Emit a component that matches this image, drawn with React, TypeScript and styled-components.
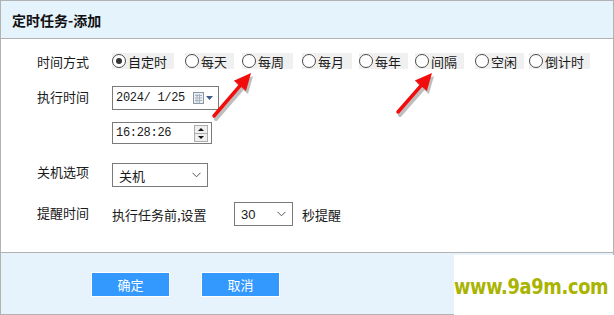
import React from 'react';
import styled, { createGlobalStyle } from 'styled-components';

const GlobalStyle = createGlobalStyle`
  html, body {
    margin: 0;
    padding: 0;
    background: #ffffff;
  }
  body {
    font-family: "Noto Sans CJK SC", "Liberation Sans", sans-serif;
    color: #1a1a1a;
  }
`;

const Page = styled.div`
  position: relative;
  width: 614px;
  height: 315px;
  overflow: hidden;
`;

const Dialog = styled.div`
  width: 614px;
  height: 315px;
  box-sizing: border-box;
  border: 1px solid #b2b2b2;
  display: flex;
  flex-direction: column;
`;

const TitleBar = styled.div`
  height: 37px;
  background: #e5f3fd;
  border-bottom: 1px solid #b2b2b2;
  display: flex;
  align-items: center;
  padding-left: 11px;
  font-size: 14px;
  font-weight: 700;
  color: #111;
`;

const Body = styled.div`
  flex: 1;
  padding: 14px 0 0 36px;
  display: flex;
  flex-direction: column;
`;

const Row = styled.div<{ $mt?: number }>`
  display: grid;
  grid-template-columns: 75px auto;
  align-items: start;
  margin-top: ${(p) => p.$mt ?? 0}px;
`;

const Label = styled.div<{ $pt?: number }>`
  font-size: 13px;
  line-height: 18px;
  padding-top: ${(p) => p.$pt ?? 0}px;
`;

const RadioGroup = styled.div`
  display: flex;
  align-items: center;
`;

const RadioItem = styled.div<{ $w: number; $gap: number }>`
  width: ${(p) => p.$w}px;
  margin-right: ${(p) => p.$gap}px;
  height: 16px;
  background: #f0f0f0;
  display: flex;
  align-items: center;
  font-size: 13px;
  white-space: nowrap;
`;

const RadioCircle = styled.span<{ $on?: boolean }>`
  width: 12px;
  height: 12px;
  border: 1px solid #4a4a4a;
  border-radius: 50%;
  background: #fff;
  margin: 0 2px 0 0;
  display: inline-flex;
  align-items: center;
  justify-content: center;
  &::after {
    content: '';
    width: 6px;
    height: 6px;
    border-radius: 50%;
    background: ${(p) => (p.$on ? '#333' : 'transparent')};
  }
`;

const Stack = styled.div`
  display: flex;
  flex-direction: column;
  gap: 12px;
`;

const Field = styled.div<{ $w: number; $h: number }>`
  width: ${(p) => p.$w}px;
  height: ${(p) => p.$h}px;
  box-sizing: border-box;
  border: 1px solid #7a7a7a;
  background: #fff;
  display: flex;
  align-items: center;
  padding-left: 3px;
  padding-right: 3px;
  font-family: "Liberation Mono", "DejaVu Sans Mono", monospace;
  font-size: 12px;
  letter-spacing: -0.3px;
`;

const FieldText = styled.span`
  flex: 1;
  white-space: pre;
`;

const Spinner = styled.div`
  width: 14px;
  height: 17px;
  box-sizing: border-box;
  border: 1px solid #adadad;
  background: #efefef;
  display: flex;
  flex-direction: column;
`;

const SpinHalf = styled.div<{ $down?: boolean }>`
  flex: 1;
  display: flex;
  align-items: center;
  justify-content: center;
  border-top: ${(p) => (p.$down ? '1px solid #adadad' : 'none')};
  &::after {
    content: '';
    border-left: 3px solid transparent;
    border-right: 3px solid transparent;
    ${(p) => (p.$down ? 'border-top: 3px solid #111;' : 'border-bottom: 3px solid #111;')}
  }
`;

const SelectBox = styled.div<{ $w: number }>`
  width: ${(p) => p.$w}px;
  height: 24px;
  box-sizing: border-box;
  border: 1px solid #7a7a7a;
  background: #fff;
  display: flex;
  align-items: center;
  padding: 0 6px 0 6px;
  font-size: 13px;
`;

const SelectText = styled.span<{ $sans?: boolean }>`
  flex: 1;
  font-family: ${(p) =>
    p.$sans ? '"Liberation Sans", sans-serif' : '"Noto Sans CJK SC", sans-serif'};
`;

const Inline = styled.div`
  display: flex;
  align-items: center;
  font-size: 13px;
`;

const Footer = styled.div`
  height: 61px;
  border-top: 1px solid #b2b2b2;
  background: #e6f3fd;
  display: flex;
  align-items: center;
  padding-left: 90px;
  gap: 31px;
`;

const Button = styled.div`
  width: 79px;
  height: 25px;
  box-sizing: border-box;
  border: 1px solid #ffffff;
  background: #3399ff;
  color: #fff;
  font-size: 13px;
  display: flex;
  align-items: center;
  justify-content: center;
  margin-top: 2px;
`;

const Watermark = styled.div`
  position: absolute;
  left: 454px;
  top: 255px;
  width: 160px;
  height: 60px;
  background: #fff;
  overflow: hidden;
`;

const WatermarkText = styled.div`
  position: absolute;
  left: 0;
  top: 21px;
  white-space: nowrap;
  font-family: "Liberation Sans Narrow", "DejaVu Sans Condensed", "Liberation Sans", sans-serif;
  font-weight: 700;
  font-size: 19px;
  line-height: 19px;
  color: #a9b400;
  letter-spacing: -0.3px;
  transform: scale(1.04, 1.12);
  transform-origin: left top;
`;

const ArrowLayer = styled.svg`
  position: absolute;
  left: 0;
  top: 0;
  pointer-events: none;
`;

const CalendarIcon = () => (
  <svg width="22" height="14" viewBox="0 0 22 14">
    <rect x="0.5" y="1.5" width="10" height="11" fill="#e9eef4" stroke="#8b96a3" />
    <path d="M2 4.5h7M2 7h7M2 9.5h7M4 3v9M6.5 3v9" stroke="#a9b3be" strokeWidth="1" />
    <path d="M13 5h7l-3.5 4z" fill="#3e5c8a" />
  </svg>
);

const Chevron = () => (
  <svg width="9" height="6" viewBox="0 0 9 6">
    <path d="M0.5 0.8L4.5 4.8L8.5 0.8" fill="none" stroke="#555" strokeWidth="1" />
  </svg>
);

const Arrow = ({ x1, y1, x2, y2 }: { x1: number; y1: number; x2: number; y2: number }) => {
  const a = Math.atan2(y2 - y1, x2 - x1);
  const L = 17;
  const W = 8;
  const bx = x2 - L * Math.cos(a);
  const by = y2 - L * Math.sin(a);
  const px = -Math.sin(a);
  const py = Math.cos(a);
  const head = `${x2},${y2} ${bx + W * px},${by + W * py} ${bx - W * px},${by - W * py}`;
  return (
    <g>
      <g transform="translate(2,3)" opacity="0.25">
        <line x1={x1} y1={y1} x2={bx} y2={by} stroke="#000" strokeWidth="4" strokeLinecap="round" />
        <polygon points={head} fill="#000" />
      </g>
      <line x1={x1} y1={y1} x2={bx} y2={by} stroke="#f20d0d" strokeWidth="3.5" strokeLinecap="round" />
      <polygon points={head} fill="#f20d0d" />
    </g>
  );
};

const radios = [
  { t: '自定时', w: 62, gap: 11, on: true },
  { t: '每天', w: 49, gap: 8 },
  { t: '每周', w: 51, gap: 9 },
  { t: '每月', w: 50, gap: 7 },
  { t: '每年', w: 49, gap: 7 },
  { t: '间隔', w: 49, gap: 11 },
  { t: '空闲', w: 49, gap: 5 },
  { t: '倒计时', w: 61, gap: 0 },
];

export default function App() {
  return (
    <Page>
      <GlobalStyle />
      <Dialog>
        <TitleBar>定时任务-添加</TitleBar>
        <Body>
          <Row>
            <Label>时间方式</Label>
            <RadioGroup>
              {radios.map((r) => (
                <RadioItem key={r.t} $w={r.w} $gap={r.gap}>
                  <RadioCircle $on={r.on} />
                  {r.t}
                </RadioItem>
              ))}
            </RadioGroup>
          </Row>
          <Row $mt={15}>
            <Label $pt={2}>执行时间</Label>
            <Stack>
              <Field $w={107} $h={24}>
                <FieldText>2024/ 1/25</FieldText>
                <CalendarIcon />
              </Field>
              <Field $w={100} $h={22}>
                <FieldText>16:28:26</FieldText>
                <Spinner>
                  <SpinHalf />
                  <SpinHalf $down />
                </Spinner>
              </Field>
            </Stack>
          </Row>
          <Row $mt={19}>
            <Label $pt={0}>关机选项</Label>
            <SelectBox $w={96}>
              <SelectText>关机</SelectText>
              <Chevron />
            </SelectBox>
          </Row>
          <Row $mt={15}>
            <Label $pt={2}>提醒时间</Label>
            <Inline>
              <span style={{ width: 122 }}>执行任务前,设置</span>
              <SelectBox $w={59}>
                <SelectText $sans>30</SelectText>
                <Chevron />
              </SelectBox>
              <span style={{ marginLeft: 9 }}>秒提醒</span>
            </Inline>
          </Row>
        </Body>
        <Footer>
          <Button>确定</Button>
          <Button>取消</Button>
        </Footer>
      </Dialog>
      <Watermark>
        <WatermarkText>www.9a9m.com</WatermarkText>
      </Watermark>
      <ArrowLayer width="614" height="315">
        <Arrow x1={214} y1={116} x2={251} y2={73} />
        <Arrow x1={398} y1={112} x2={432} y2={73} />
      </ArrowLayer>
    </Page>
  );
}
